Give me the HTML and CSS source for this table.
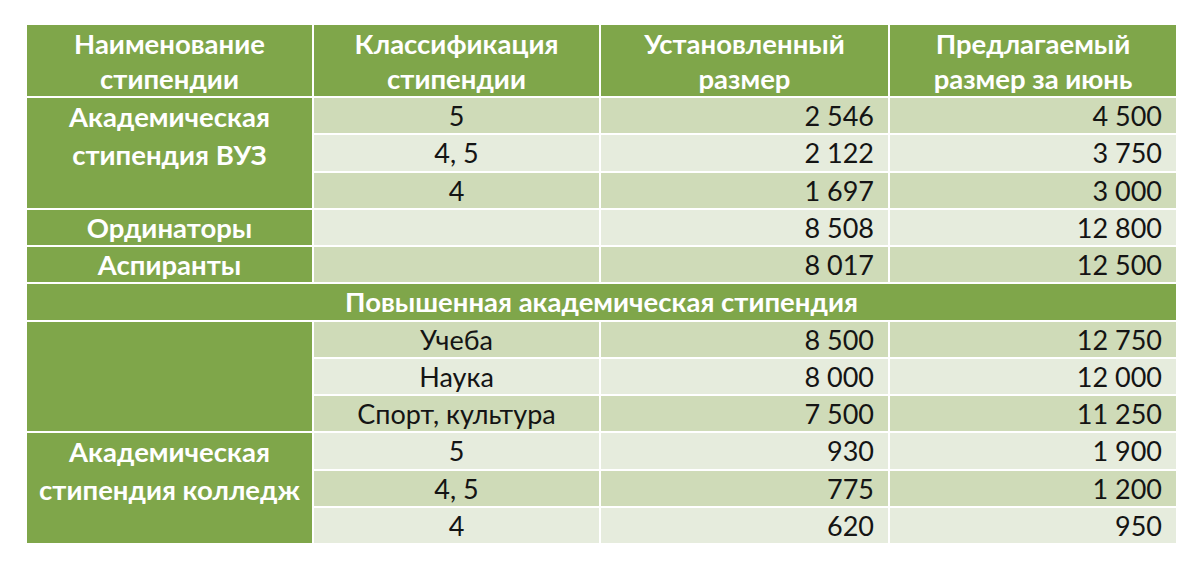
FILE: index.html
```html
<!DOCTYPE html>
<html lang="ru">
<head>
<meta charset="utf-8">
<link rel="stylesheet" href="styles.css">
</head>
<body>
<table class="grid">
  <colgroup>
    <col class="c1"><col class="c2"><col class="c3"><col class="c4">
  </colgroup>
  <thead>
    <tr>
      <th>Наименование<br>стипендии</th>
      <th>Классификация<br>стипендии</th>
      <th>Установленный<br>размер</th>
      <th>Предлагаемый<br>размер за июнь</th>
    </tr>
  </thead>
  <tbody>
    <tr class="dark">
      <td class="name multi" rowspan="3">Академическая<br>стипендия ВУЗ</td>
      <td class="cls">5</td><td class="num">2 546</td><td class="num">4 500</td>
    </tr>
    <tr class="light"><td class="cls">4, 5</td><td class="num">2 122</td><td class="num">3 750</td></tr>
    <tr class="dark"><td class="cls">4</td><td class="num">1 697</td><td class="num">3 000</td></tr>
    <tr class="light"><td class="name">Ординаторы</td><td class="cls"></td><td class="num">8 508</td><td class="num">12 800</td></tr>
    <tr class="dark"><td class="name">Аспиранты</td><td class="cls"></td><td class="num">8 017</td><td class="num">12 500</td></tr>
    <tr><td class="section" colspan="4">Повышенная академическая стипендия</td></tr>
    <tr class="dark">
      <td class="name multi" rowspan="3"></td>
      <td class="cls">Учеба</td><td class="num">8 500</td><td class="num">12 750</td>
    </tr>
    <tr class="light"><td class="cls">Наука</td><td class="num">8 000</td><td class="num">12 000</td></tr>
    <tr class="dark"><td class="cls">Спорт, культура</td><td class="num">7 500</td><td class="num">11 250</td></tr>
    <tr class="light">
      <td class="name multi" rowspan="3">Академическая<br>стипендия колледж</td>
      <td class="cls">5</td><td class="num">930</td><td class="num">1 900</td>
    </tr>
    <tr class="dark"><td class="cls">4, 5</td><td class="num">775</td><td class="num">1 200</td></tr>
    <tr class="light"><td class="cls">4</td><td class="num">620</td><td class="num">950</td></tr>
  </tbody>
</table>
</body>
</html>
```

FILE: styles.css
```css
html, body {
  margin: 0;
  padding: 0;
  background: #ffffff;
}
body {
  padding: 23px 0 0 25px;
  font-family: Lato, "Noto Sans", sans-serif;
}
.grid {
  border-collapse: collapse;
  table-layout: fixed;
  width: 1151px;
  font-size: 27px;
}
.c1 { width: 287px; }
.c2 { width: 287px; }
.c3 { width: 289px; }
.c4 { width: 288px; }
.grid th,
.grid td {
  border: 2px solid #ffffff;
  padding: 0;
}
.grid th {
  background: #7fa64a;
  color: #ffffff;
  font-weight: 700;
  font-size: 27.5px;
  line-height: 35px;
  height: 71px;
  text-align: center;
  vertical-align: middle;
}
.grid td {
  height: 35px;
  line-height: 35.25px;
  color: #141414;
}
.dark td { background: #cfdbb8; }
.light td { background: #e6ecdd; }
.grid td.name {
  background: #7fa64a;
  color: #ffffff;
  font-weight: 700;
  font-size: 27.5px;
  text-align: center;
  vertical-align: top;
}
.grid td.name.multi {
  line-height: 38px;
}
.grid td.section {
  background: #7fa64a;
  color: #ffffff;
  font-weight: 700;
  font-size: 27.5px;
  text-align: center;
}
.cls { text-align: center; }
.num {
  text-align: right;
  padding-right: 14px !important;
}
```
